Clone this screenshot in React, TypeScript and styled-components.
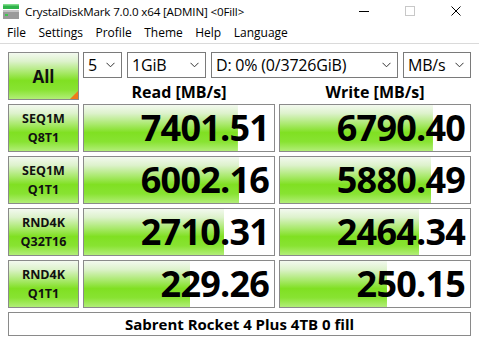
import styled, { createGlobalStyle } from "styled-components";

const GlobalStyle = createGlobalStyle`
  html, body {
    margin: 0;
    padding: 0;
    background: #ffffff;
  }
  body {
    font-family: "Open Sans", "Noto Sans", "Liberation Sans", sans-serif;
    color: #000;
  }
`;

const GREEN = `linear-gradient(to bottom, #f3f9ef 0%, #ddf2cc 18%, #a9e96c 42%, #80e022 60%, #88e332 80%, #b2ee78 100%)`;

const Window = styled.div`
  width: 479px;
  height: 344px;
  overflow: hidden;
  background: #fff;
`;

const TitleBar = styled.div`
  height: 22px;
  display: flex;
  align-items: center;
  padding-left: 2px;
  font-size: 11.6px;
  letter-spacing: -0.15px;
`;

const TitleText = styled.span`
  margin-left: 5px;
  flex: 1;
  padding-top: 1px;
`;

const WinBtn = styled.div`
  width: 46px;
  height: 22px;
  display: flex;
  align-items: center;
  justify-content: center;
`;

const MenuBar = styled.div`
  height: 21px;
  display: flex;
  align-items: center;
  padding-left: 7px;
  gap: 12.5px;
  font-size: 12px;
  border-bottom: 1px solid #dadada;
`;

const Content = styled.div`
  padding: 8px 8px 0 8px;
  display: grid;
  grid-template-columns: 71px 192px 192px;
  column-gap: 4px;
  row-gap: 4px;
`;

const GreenButton = styled.div<{ $big?: boolean }>`
  position: relative;
  box-sizing: border-box;
  border: 1px solid #8a8a8a;
  background: ${GREEN};
  display: flex;
  flex-direction: column;
  align-items: center;
  justify-content: center;
  font-weight: 700;
  font-size: ${(p) => (p.$big ? "17px" : "12.5px")};
  line-height: ${(p) => (p.$big ? "1" : "19px")};
  color: #111;
  height: 48px;
`;

const Corner = styled.div`
  position: absolute;
  right: 0;
  bottom: 0;
  width: 0;
  height: 0;
  border-left: 8px solid transparent;
  border-bottom: 8px solid #f07a1a;
`;

const TopRight = styled.div`
  grid-column: 2 / 4;
  display: flex;
  flex-direction: column;
`;

const Selects = styled.div`
  display: flex;
  gap: 5px;
  height: 26px;
`;

const Select = styled.div<{ $w: number }>`
  box-sizing: border-box;
  width: ${(p) => p.$w}px;
  height: 26px;
  border: 1px solid #7a7a7a;
  display: flex;
  align-items: center;
  justify-content: space-between;
  padding: 0 6px 0 4px;
  font-size: 16px;
  letter-spacing: -0.2px;
`;

const Headers = styled.div`
  display: grid;
  grid-template-columns: 192px 192px;
  column-gap: 4px;
  height: 22px;
`;

const Header = styled.div`
  text-align: center;
  font-weight: 700;
  font-size: 16px;
  line-height: 28px;
`;

const Cell = styled.div<{ $fill: number }>`
  box-sizing: border-box;
  height: 48px;
  border: 1px solid #8a8a8a;
  background-color: #fff;
  background-image: ${GREEN};
  background-repeat: no-repeat;
  background-size: ${(p) => p.$fill}% 100%;
  display: flex;
  align-items: center;
  justify-content: flex-end;
  padding-right: 5px;
  font-weight: 700;
  font-size: 36px;
  letter-spacing: -0.8px;
  line-height: 1;
`;

const Comment = styled.div`
  grid-column: 1 / 4;
  box-sizing: border-box;
  height: 24px;
  border: 1px solid #8a8a8a;
  display: flex;
  align-items: center;
  justify-content: center;
  font-weight: 700;
  font-size: 15px;
`;

const Chevron = () => (
  <svg width="9" height="6" viewBox="0 0 9 6">
    <path d="M0.5 0.8 L4.5 4.8 L8.5 0.8" fill="none" stroke="#333" strokeWidth="1" />
  </svg>
);

const AppIcon = () => (
  <svg width="18" height="18" viewBox="0 0 18 18">
    <rect x="1" y="2" width="16" height="5" fill="#2fb34a" />
    <rect x="1" y="2" width="16" height="1.5" fill="#7fdc8a" />
    <rect x="1" y="8" width="16" height="9" fill="#9a9a9a" />
    <rect x="1" y="8" width="16" height="2" fill="#c4c4c4" />
    <rect x="3" y="12" width="3" height="2" fill="#3ec64f" />
  </svg>
);

const rows = [
  { a: "SEQ1M", b: "Q8T1", r: "7401.51", rf: 81, w: "6790.40", wf: 80.5 },
  { a: "SEQ1M", b: "Q1T1", r: "6002.16", rf: 81.6, w: "5880.49", wf: 79.5 },
  { a: "RND4K", b: "Q32T16", r: "2710.31", rf: 73.7, w: "2464.34", wf: 73.2 },
  { a: "RND4K", b: "Q1T1", r: "229.26", rf: 55.8, w: "250.15", wf: 56.3 },
];

export default function App() {
  return (
    <Window>
      <GlobalStyle />
      <TitleBar>
        <AppIcon />
        <TitleText>CrystalDiskMark 7.0.0 x64 [ADMIN] &lt;0Fill&gt;</TitleText>
        <WinBtn>
          <svg width="12" height="12" viewBox="0 0 12 12">
            <path d="M1 6.5 H11" stroke="#000" strokeWidth="1" />
          </svg>
        </WinBtn>
        <WinBtn>
          <svg width="12" height="12" viewBox="0 0 12 12">
            <rect x="1.5" y="1.5" width="9" height="9" fill="none" stroke="#c8c8c8" strokeWidth="1" />
          </svg>
        </WinBtn>
        <WinBtn>
          <svg width="12" height="12" viewBox="0 0 12 12">
            <path d="M1.5 1.5 L10.5 10.5 M10.5 1.5 L1.5 10.5" stroke="#000" strokeWidth="1" />
          </svg>
        </WinBtn>
      </TitleBar>
      <MenuBar>
        <span>File</span>
        <span>Settings</span>
        <span>Profile</span>
        <span>Theme</span>
        <span>Help</span>
        <span>Language</span>
      </MenuBar>
      <Content>
        <GreenButton $big>
          All
          <Corner />
        </GreenButton>
        <TopRight>
          <Selects>
            <Select $w={39}>
              5<Chevron />
            </Select>
            <Select $w={79}>
              1GiB<Chevron />
            </Select>
            <Select $w={187}>
              D: 0% (0/3726GiB)<Chevron />
            </Select>
            <Select $w={68}>
              MB/s<Chevron />
            </Select>
          </Selects>
          <Headers>
            <Header>Read [MB/s]</Header>
            <Header>Write [MB/s]</Header>
          </Headers>
        </TopRight>
        {rows.map((row, i) => (
          <>
            <GreenButton key={"l" + i}>
              <span>{row.a}</span>
              <span>{row.b}</span>
            </GreenButton>
            <Cell key={"r" + i} $fill={row.rf}>
              {row.r}
            </Cell>
            <Cell key={"w" + i} $fill={row.wf}>
              {row.w}
            </Cell>
          </>
        ))}
        <Comment>Sabrent Rocket 4 Plus 4TB 0 fill</Comment>
      </Content>
    </Window>
  );
}
